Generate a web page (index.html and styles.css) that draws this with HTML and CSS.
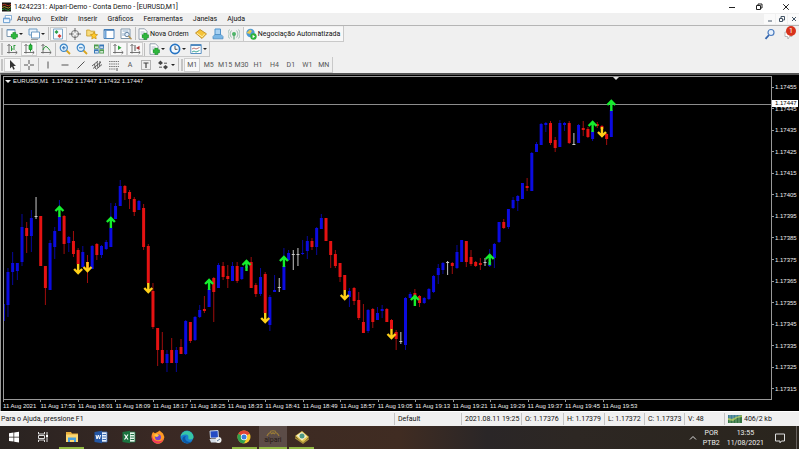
FILE: index.html
```html
<!DOCTYPE html>
<html lang="pt-BR">
<head>
<meta charset="utf-8">
<title>14242231: Alpari-Demo - Conta Demo - [EURUSD,M1]</title>
<link rel="stylesheet" href="styles.css">
</head>
<body>
<svg class="defs" aria-hidden="true">
  <symbol id="plus" viewBox="0 0 8 8"><path d="M2.500 .5h3v2h2v3h-2v2h-3v-2h-2v-3h2z" fill="#2eb83c" stroke="#138a25" stroke-width=".6"/></symbol>
  <symbol id="lens" viewBox="0 0 12 12"><path d="M7 7l4 4" stroke="#d9a520" stroke-width="1.800"/><circle cx="4.800" cy="4.800" r="3.600" fill="#e3f2fc" stroke="#3b86c8" stroke-width="1.200"/></symbol>
  <symbol id="axes" viewBox="0 0 12 12"><path d="M3 1.500v9M1 9.500h10M1.500 3L3 1.300 4.500 3M9.600 8l1.600 1.500L9.600 11" fill="none" stroke="#666" stroke-width=".9"/></symbol>
  <symbol id="page" viewBox="0 0 12 12"><path d="M2 .8h5.500L10 3.300v8H2z" fill="#fff" stroke="#7c8c9c" stroke-width=".8"/><path d="M3.500 4h4M3.500 6h4" stroke="#9ab" stroke-width=".8"/></symbol>
</svg>

<header class="titlebar">
  <svg class="app-icon" viewBox="0 0 10 10"><path d="M0 0h10v10H0z" fill="#181410"/><path d="M0 3q3-2 5 0t5-1" stroke="#c83a22" fill="none"/><path d="M0 5.500q3-2 5 0t5-1" stroke="#b9a52b" fill="none"/><path d="M0 8q3-2 5 0t5-1" stroke="#2f9a3a" fill="none"/></svg>
  <h1>14242231: Alpari-Demo - Conta Demo - [EURUSD,M1]</h1>
  <div class="window-buttons">
    <button aria-label="Minimizar"><svg viewBox="0 0 8 8"><path d="M1 4.500h6"/></svg></button>
    <button aria-label="Restaurar"><svg viewBox="0 0 8 8"><path d="M1.500 2.500h4v4h-4zM3 2.500V1h4v4H5.500"/></svg></button>
    <button aria-label="Fechar"><svg viewBox="0 0 8 8"><path d="M1.200 1.200l5.600 5.600M6.800 1.200L1.200 6.800"/></svg></button>
  </div>
</header>

<nav class="menubar">
  <svg class="menu-icon" viewBox="0 0 10 10"><path d="M2.500.5h7v5h-7z" fill="#fff" stroke="#77a3cf"/><path d="M.5 3.500h7v5h-7z" fill="#eef6ff" stroke="#5a94cc"/><path d="M1 4.200h6" stroke="#5a94cc"/></svg>
  <a href="#">Arquivo</a><a href="#">Exibir</a><a href="#">Inserir</a><a href="#">Gráficos</a><a href="#">Ferramentas</a><a href="#">Janelas</a><a href="#">Ajuda</a>
  <div class="child-buttons">
    <button aria-label="Minimizar gráfico"><svg viewBox="0 0 8 8"><path d="M2 6h4"/></svg></button>
    <button aria-label="Restaurar gráfico"><svg viewBox="0 0 8 8"><path d="M1.500 3.500h3v3h-3zM3 3.500v-2h3.500V5h-2"/></svg></button>
    <button aria-label="Fechar gráfico"><svg viewBox="0 0 8 8"><path d="M2 2l4 4M6 2L2 6"/></svg></button>
  </div>
</nav>

<main class="workspace">
  <div class="toolbars">
    <div class="toolbar">
      <div class="bar">
        <span class="grip"></span>
        <div class="tools drop two">
          <button aria-label="Novo gráfico"><svg viewBox="0 0 12 12"><path d="M1 1.500h8v7H1z" fill="#fff" stroke="#7894ac"/><path d="M1 2h8" stroke="#6c9ccc"/><use href="#plus" x="4.500" y="4" width="7.500" height="7.500"/></svg><i></i></button>
          <button aria-label="Perfis"><svg viewBox="0 0 12 12"><path d="M1 1h8v6H1z" fill="#eaf3fb" stroke="#6d9cc5"/><path d="M3.500 4h8v6h-8z" fill="#fff" stroke="#6d9cc5"/><path d="M3 11.300h7" stroke="#8a8a8a"/></svg><i></i></button>
        </div>
        <span class="sep"></span>
        <div class="tools five">
          <button class="on" aria-label="Observação do mercado"><svg viewBox="0 0 12 12"><path d="M1.500 1h9v10h-9z" fill="#f8fbff" stroke="#7da7c9"/><path d="M2.500 4l2-2 2 2-2 2z" fill="#2a9d45"/><path d="M5.500 8l2-2 2 2-2 2z" fill="#d83a32"/></svg></button>
          <button aria-label="Janela de dados"><svg viewBox="0 0 12 12"><circle cx="6" cy="6" r="3.600" fill="none" stroke="#777"/><path d="M6 0v4.500M6 7.500V12M0 6h4.500M7.500 6H12" stroke="#666"/></svg></button>
          <button aria-label="Navegador"><svg viewBox="0 0 12 12"><path d="M.7 2h3l1 1.200h4V8h-8z" fill="#f8dc7e" stroke="#c79a25" stroke-width=".8"/><path d="M8 4l1.100 2.300 2.500.3-1.800 1.800.4 2.500L8 9.700 5.800 11l.4-2.500-1.800-1.900 2.500-.3z" fill="#ffca28" stroke="#c58c12" stroke-width=".7"/></svg></button>
          <button aria-label="Terminal"><svg viewBox="0 0 12 12"><path d="M1 1.500h10v9H1z" fill="#fff" stroke="#4e86bd"/><path d="M1 2h10" stroke="#3e78b4" stroke-width="1.500"/><path d="M1.500 3h2v7h-2z" fill="#6fa4d8"/></svg></button>
          <button aria-label="Testador de estratégia"><svg viewBox="0 0 12 12"><path d="M1 1h9v9.500H1z" fill="#fff" stroke="#8198ac"/><path d="M2.500 3h6M3 8V5M5 8V4.500" stroke="#8aaccb"/><circle cx="7" cy="6.500" r="2.200" fill="#e4effa" stroke="#6686a6"/><path d="M8.500 8l3 3.300" stroke="#b29454" stroke-width="1.500"/></svg></button>
        </div>
        <span class="sep"></span>
        <button class="labelled order"><svg viewBox="0 0 12 12"><use href="#page" width="12" height="12"/><use href="#plus" x="4.500" y="4.500" width="7.500" height="7.500"/></svg>Nova Ordem</button>
        <div class="tools three">
          <button aria-label="MetaEditor"><svg viewBox="0 0 12 12"><path d="M.5 5L5 1.500l6.500 4.300L7 10.500z" fill="#f5c339" stroke="#b9851b" stroke-width=".8"/><path d="M2 5.300l5.200 3.500 2.500-3" fill="none" stroke="#fff0a8"/></svg></button>
          <button aria-label="Comunidade"><svg viewBox="0 0 12 12"><path d="M3 1h5.500v6H3z" fill="#a9d2f2" stroke="#4c93cd"/><path d="M1 8.500L3 6.500h6l2 2v2.300H1z" fill="#79b6e5" stroke="#4c8dc2" stroke-width=".8"/></svg></button>
          <button aria-label="Sinais"><svg viewBox="0 0 12 12"><circle cx="6" cy="6" r="2" fill="#4db568"/><path d="M3.500 2.500a5 5 0 000 7M8.500 2.500a5 5 0 010 7M1.500 1.500a7 7 0 000 9M10.500 1.500a7 7 0 010 9" fill="none" stroke="#93b7aa" stroke-width=".9"/><path d="M6 7v4.500" stroke="#469d62"/></svg></button>
        </div>
        <button class="labelled auto on"><svg viewBox="0 0 12 12"><circle cx="5.500" cy="5" r="4.200" fill="#4c9bd5"/><path d="M1.500 5L5 1.500l2 1.500-2 3z" fill="#e9c650"/><circle cx="8.500" cy="8.500" r="3.200" fill="#2bb339"/><path d="M7.600 6.800l2.500 1.700-2.500 1.700z" fill="#fff"/></svg>Negociação Automatizada</button>
      </div>
      <div class="side-tools">
        <button aria-label="Pesquisar"><svg viewBox="0 0 12 12"><path d="M5 7L1.500 10.800" stroke="#3465ad" stroke-width="1.800"/><circle cx="7" cy="4.500" r="3" fill="#e7f1fd" stroke="#4d7dbf" stroke-width="1.200"/></svg></button>
        <button class="alert" aria-label="Notificações"><svg viewBox="0 0 12 12"><path d="M1 4h7v4.500H5.500L4 11 3.500 8.500H1z" fill="#fff" stroke="#aaa" stroke-width=".8"/></svg><b>1</b></button>
      </div>
    </div>

    <div class="toolbar">
      <div class="bar">
        <span class="grip"></span>
        <div class="tools three">
          <button aria-label="Barras"><svg viewBox="0 0 12 12"><use href="#axes" width="12" height="12"/><path d="M5.500 3v5M8 2v5M8 2.500h1.500M5.500 6H7" stroke="#2c9a3c"/></svg></button>
          <button class="on" aria-label="Candles"><svg viewBox="0 0 12 12"><use href="#axes" width="12" height="12"/><path d="M7.500.5v8" stroke="#168a29"/><path d="M6 2h3v4.500H6z" fill="#2bbd3d" stroke="#168a29" stroke-width=".7"/></svg></button>
          <button aria-label="Linha"><svg viewBox="0 0 12 12"><use href="#axes" width="12" height="12"/><path d="M3 7q2-5 4-3t3 3.500" fill="none" stroke="#2c9a3c"/></svg></button>
        </div>
        <span class="sep"></span>
        <div class="tools three">
          <button aria-label="Ampliar"><svg viewBox="0 0 12 12"><use href="#lens" width="12" height="12"/><path d="M3 4.800h3.600M4.800 3v3.600" stroke="#2b6fb4"/></svg></button>
          <button aria-label="Reduzir"><svg viewBox="0 0 12 12"><use href="#lens" width="12" height="12"/><path d="M3 4.800h3.600" stroke="#2b6fb4"/></svg></button>
          <button aria-label="Lado a lado"><svg viewBox="0 0 12 12"><path d="M1 1.500h4.700v4.200H1zM6.300 6.300H11v4.200H6.300z" fill="#4d9c4f"/><path d="M6.300 1.500H11v4.200H6.300zM1 6.300h4.700v4.200H1z" fill="#3878b7"/><path d="M2 3.500h3v1.200H2zM7.200 3.500h3v1.200h-3zM2 8.300h3v1.200H2zM7.200 8.300h3v1.200h-3z" fill="#fff"/></svg></button>
        </div>
        <span class="sep"></span>
        <div class="tools pair">
          <button class="on" aria-label="Rolagem automática"><svg viewBox="0 0 12 12"><use href="#axes" width="12" height="12"/><path d="M6 2.500l3.500 2.300L6 7z" fill="#2ca63c"/></svg></button>
          <button class="on" aria-label="Deslocamento"><svg viewBox="0 0 12 12"><use href="#axes" width="12" height="12"/><path d="M6 2v6" stroke="#555"/><path d="M10.500 2.800L7 5l3.500 2z" fill="#a33"/></svg></button>
        </div>
        <span class="sep"></span>
        <div class="tools drop triple">
          <button aria-label="Indicadores"><svg viewBox="0 0 12 12"><use href="#page" width="12" height="12"/><use href="#plus" x="4.500" y="4.500" width="7.500" height="7.500"/></svg><i></i></button>
          <button aria-label="Períodos"><svg viewBox="0 0 12 12"><circle cx="6" cy="6" r="4.600" fill="#f4faff" stroke="#2674c3" stroke-width="1.700"/><path d="M6 3v3.300h2.500" fill="none" stroke="#444" stroke-width=".9"/></svg><i></i></button>
          <button aria-label="Modelos"><svg viewBox="0 0 12 12"><path d="M.8 1.500h10.400v9H.8z" fill="#fff" stroke="#5b91c4"/><path d="M1 2.300h10" stroke="#4e88bf" stroke-width="1.500"/><path d="M2 6l2-1 2 1 3.500-1.500" fill="none" stroke="#b77"/><path d="M2 9l2-1 2 1 3.500-1.500" fill="none" stroke="#4a9"/></svg><i></i></button>
        </div>
      </div>
    </div>

    <div class="toolbar">
      <div class="bar">
        <span class="grip"></span>
        <div class="tools pair">
          <button class="on" aria-label="Cursor"><svg viewBox="0 0 12 12"><path d="M4 1v8.500l2-2 1.300 3.300 1.500-.7-1.400-3H10z" fill="#333"/></svg></button>
          <button aria-label="Mira"><svg viewBox="0 0 12 12"><path d="M6 1v4M6 7v4M1 6h4M7 6h4" stroke="#555"/></svg></button>
        </div>
        <span class="sep"></span>
        <div class="tools eight">
          <button aria-label="Linha vertical"><svg viewBox="0 0 12 12"><path d="M6 2.500v7" stroke="#555"/></svg></button>
          <button aria-label="Linha horizontal"><svg viewBox="0 0 12 12"><path d="M2.500 6h7" stroke="#555"/></svg></button>
          <button aria-label="Linha de tendência"><svg viewBox="0 0 12 12"><path d="M2.500 9.500l7-7" stroke="#555"/></svg></button>
          <button aria-label="Canal"><svg viewBox="0 0 12 12"><path d="M1 7l6-5M2 9.500L10 3M5 10.500l6-5M3.500 5l1 5M6 3l1 6M9 2l-.5 5" stroke="#555" stroke-width=".9"/></svg></button>
          <button aria-label="Fibonacci"><svg viewBox="0 0 12 12"><path d="M1 2.500h10M1 5h10M1 7.500h10M1 10h7" stroke="#777" stroke-dasharray="1.500 .7"/><path d="M9 9v3" stroke="#555"/></svg></button>
          <button aria-label="Texto">A</button>
          <button aria-label="Etiqueta"><svg viewBox="0 0 12 12"><path d="M1.500 1.500h9v9h-9z" fill="none" stroke="#777" stroke-dasharray="1 1"/><path d="M3.500 4h5M6 4v5" stroke="#444" stroke-width="1.200"/></svg></button>
          <button aria-label="Setas"><svg viewBox="0 0 12 12"><path d="M1 4l2.500-2.500L6 4 3.500 6zM6 8l2.500-2L11 8l-2.500 2.500z" fill="#444"/><path d="M7 4.200h3M2 8.200h3" stroke="#555"/></svg></button>
        </div>
        <i class="caret"></i>
        <span class="sep"></span>
        <span class="grip"></span>
        <div class="tools nine">
          <button class="on">M1</button><button>M5</button><button>M15</button><button>M30</button><button>H1</button><button>H4</button><button>D1</button><button>W1</button><button>MN</button>
        </div>
      </div>
    </div>
  </div>

  <section class="chart">
    <div class="plot">
      <svg id="candles" viewBox="4 77 767 323" preserveAspectRatio="xMinYMin slice" role="img" aria-label="EURUSD M1"></svg>
      <p class="quote"><i></i>EURUSD,M1&nbsp; 1.17432 1.17447 1.17432 1.17447</p>
    </div>
    <div class="prices">
      <span>1.17455</span><span>1.17445</span><span>1.17435</span><span>1.17425</span><span>1.17415</span><span>1.17405</span><span>1.17395</span><span>1.17385</span><span>1.17375</span><span>1.17365</span><span>1.17355</span><span>1.17345</span><span>1.17335</span><span>1.17325</span><span>1.17315</span>
      <b>1.17447</b>
    </div>
    <div class="times">
      <span>11 Aug 2021</span><span>11 Aug 17:53</span><span>11 Aug 18:01</span><span>11 Aug 18:09</span><span>11 Aug 18:17</span><span>11 Aug 18:25</span><span>11 Aug 18:33</span><span>11 Aug 18:41</span><span>11 Aug 18:49</span><span>11 Aug 18:57</span><span>11 Aug 19:05</span><span>11 Aug 19:13</span><span>11 Aug 19:21</span><span>11 Aug 19:29</span><span>11 Aug 19:37</span><span>11 Aug 19:45</span><span>11 Aug 19:53</span>
    </div>
  </section>
</main>

<footer class="status">
  <span>Para o Ajuda, pressione F1</span><span>Default</span><span>2021.08.11 19:25</span><span>O: 1.17376</span><span>H: 1.17379</span><span>L: 1.17372</span><span>C: 1.17373</span><span>V: 48</span>
  <span><svg viewBox="0 0 14 8"><path d="M0 0h14v8H0z" fill="#3e7d93"/><path d="M0 3l4 1 4-2 6-2v8H0z" fill="#9cbc55"/><path d="M0 5l5 1 4-3 5-1v6H0z" fill="#347543"/><path d="M2 0v8M5 0v8M8 0v8M11 0v8" stroke="#d6e6cc" stroke-width=".4"/></svg>406/2 kb</span>
</footer>

<footer class="taskbar">
  <div class="apps">
    <button aria-label="Iniciar"><svg viewBox="0 0 16 16"><path d="M3 4.200l4.500-.7v4.200H3zM8.200 3.400L13 2.700v5H8.200zM3 8.400h4.500v4.200L3 12zM8.200 8.400H13v5l-4.800-.7z" fill="#fff"/></svg></button>
    <button aria-label="Visão de tarefas"><svg viewBox="0 0 16 16"><path d="M3.500 3v2h6V3M3.500 13v-2h6v2M3.500 6.500h6v3h-6zM12 3v10" fill="none" stroke="#ddd"/><path d="M11 6h2v2h-2z" fill="#fff"/></svg></button>
    <button class="open" aria-label="Explorador"><svg viewBox="0 0 16 16"><path d="M2 3h5l1 1.500h6V13H2z" fill="#e8ae3b"/><path d="M2 5.500h12V13H2z" fill="#fbd873"/><path d="M4 8.500h8V13h-2v-2H6v2H4z" fill="#4aa3df"/></svg></button>
    <button aria-label="Word"><svg viewBox="0 0 16 16"><path d="M8 3h6v10H8z" fill="#e8f1fb" stroke="#3c6cb4" stroke-width=".8"/><path d="M9.500 5.500H13M9.500 8H13M9.500 10.500H13" stroke="#3c6cb4"/><path d="M1.500 3L9 1.700v12.600L1.500 13z" fill="#2457a5"/><path d="M3 6l1 4 1.300-4 1.200 4 1-4" fill="none" stroke="#fff"/></svg></button>
    <button aria-label="Excel"><svg viewBox="0 0 16 16"><path d="M8 3h6v10H8z" fill="#e7f5eb" stroke="#217346" stroke-width=".8"/><path d="M9.500 5.500H13M9.500 8H13M9.500 10.500H13" stroke="#217346"/><path d="M1.500 3L9 1.700v12.600L1.500 13z" fill="#1b7440"/><path d="M3.500 5.500l3.500 5M7 5.500l-3.500 5" stroke="#fff" stroke-width="1.200"/></svg></button>
    <button aria-label="Firefox"><svg viewBox="0 0 16 16"><path d="M2 5l1-2 2 1.200 3-1.500L9.500 1.500 13 4.500q2 3 .8 6a6.200 6.200 0 01-11.700 0Q1.300 7.500 2 5z" fill="#ff9a24"/><path d="M2 5q0 6 5 7t6.500-3q-.5 5-5.700 5.400Q3 14.200 2 10.500 1.200 7 2 5z" fill="#f0385c"/><circle cx="8" cy="8.300" r="3" fill="#7544cf"/><path d="M4 6q3-2 5 .5L7 8q-2 0-3-2z" fill="#ffc83c"/></svg></button>
    <button aria-label="Edge"><svg viewBox="0 0 16 16"><circle cx="8" cy="8" r="6.500" fill="#1880cf"/><path d="M1.600 7.500A6.500 6.500 0 0114.500 8q-.2 2.500-3.500 2.500-2 0-1.700-1.500.7-3-2.500-3.400-3-.3-5.200 1.900z" fill="#37c6a5"/><path d="M6.800 7q-2 3.500 2 5.500 2 1 4.500-.6A6.500 6.500 0 018 14.500Q2.500 13 3.500 9q.8-2 3.300-2z" fill="#0c57a4"/></svg></button>
    <button aria-label="Área remota"><svg viewBox="0 0 16 16"><path d="M3 2l8-.5.500 7.500H3.500z" fill="#244bc4" stroke="#c4d2e4"/><path d="M2.500 10h8l2 3.500H4z" fill="#d5dce6"/><circle cx="11.500" cy="11" r="3" fill="#eee"/><path d="M10 12l3-2" stroke="#5a7a9a"/></svg></button>
    <button class="open" aria-label="Chrome"><svg viewBox="0 0 16 16"><circle cx="8" cy="8" r="6.500" fill="#f9c92d"/><path d="M8 8L2.370 4.750A6.500 6.500 0 0113.630 4.750z" fill="#e24335"/><path d="M8 8L2.370 4.750A6.500 6.500 0 008 14.500l2.500-5z" fill="#2fa24f"/><circle cx="8" cy="8" r="3.200" fill="#fff"/><circle cx="8" cy="8" r="2.500" fill="#3b7de0"/></svg></button>
    <button class="open active alpari"><svg viewBox="0 0 16 7"><path d="M2 6q1.500-3.500 4-3.500M6 4q2-2 4 0M10 2.500q2.500 0 4 3.500M5 1.500q3-1.500 6 0" fill="none" stroke="#9a7c36" stroke-width="1.200"/></svg>alpari</button>
    <button class="open" aria-label="MetaEditor"><svg viewBox="0 0 16 16"><path d="M1 7l7-5 7 6-6 6z" fill="#e2c64f"/><path d="M2.500 6.500L8 3l5 4.500-5 4z" fill="#f5f0cf"/><circle cx="8" cy="7" r="2.500" fill="#4d9a85"/><path d="M1 8l8 5 6-4v1.500L9 15 1 9.500z" fill="#a8923a"/></svg></button>
  </div>
  <div class="tray">
    <svg class="up" viewBox="0 0 8 8"><path d="M1 5.500l3-3 3 3"/></svg>
    <p>POR<br>PTB2</p>
    <p>13:55<br>11/08/2021</p>
    <svg class="note" viewBox="0 0 12 12"><path d="M1.500 2h9v7H7.500L6 10.800V9H1.500z"/></svg>
  </div>
</footer>
<script src="chart.js"></script>
</body>
</html>
```

FILE: styles.css
```css
* { box-sizing: border-box; }
body {
  margin: 0;
  height: 100vh;
  display: flex;
  flex-direction: column;
  overflow: hidden;
  background: #f0f0f0;
  color: #111;
  font: 7px/10px Roboto, "Open Sans", sans-serif;
}
h1, p { margin: 0; font: inherit; }
button { margin: 0; padding: 0; border: 0; background: none; color: inherit; font: inherit; }
a { color: inherit; text-decoration: none; }
svg { display: block; flex: none; }
.defs { position: absolute; width: 0; height: 0; }

.titlebar { display: flex; align-items: center; height: 13px; padding-left: 2px; background: #fff; }
.app-icon { width: 9px; height: 10px; margin-right: 3px; }
.window-buttons { display: flex; margin-left: auto; }
.window-buttons button { width: 27px; display: grid; place-items: center; }
.window-buttons svg { width: 8px; height: 8px; fill: none; stroke: #222; stroke-width: 1; }

.menubar { display: flex; align-items: center; gap: 10px; height: 13px; padding-left: 3px; border-bottom: 1px solid #b5b5b5; }
.menu-icon { width: 9px; height: 9px; margin-right: -5px; }
.child-buttons { display: flex; gap: 1px; margin-left: auto; }
.child-buttons button { width: 11px; height: 10px; display: grid; place-items: center; background: #fafafa; }
.child-buttons svg { width: 8px; height: 8px; fill: none; stroke: #456; stroke-width: 1; }

.workspace { flex: 1; min-height: 0; display: flex; flex-direction: column; }
.toolbar { display: flex; justify-content: space-between; height: 16px; }
.bar { display: flex; align-items: center; border: 1px solid #c9c9c9; border-width: 0 1px 1px 0; }
.toolbar + .toolbar { height: 15px; }
.toolbar:last-child { height: 16px; }
.grip { width: 2px; height: 12px; margin: 0 1px; border: 1px solid #c4c4c4; border-width: 0 1px; }
.sep { width: 1px; height: 13px; margin: 0 1px; background: #bdbdbd; }
.tools { display: grid; grid-auto-flow: column; grid-auto-columns: minmax(0, 1fr); height: 14px; }
.tools button { display: flex; align-items: center; justify-content: center; color: #555; }
.tools svg, .labelled svg, .side-tools svg { width: 12px; height: 12px; }
.tools .on { background: #f8f8f8; border: 1px solid #cfcfcf; }
.drop button { justify-content: flex-start; gap: 1px; padding-left: 2px; }
.drop i, .caret { border: 2px solid transparent; border-top-color: #222; border-bottom: 0; }
.pair { width: 33px; }
.two { width: 43px; }
.three { width: 50px; }
.triple { width: 63px; }
.five { width: 84px; }
.eight { width: 131px; }
.nine { width: 148px; }
.caret { margin-right: 2px; }
.labelled { display: flex; align-items: center; gap: 1px; height: 14px; color: #111; white-space: nowrap; }
.order { padding: 0 4px 0 0; }
.auto { padding: 0 3px 0 1px; background: #f8f8f8; border-left: 1px solid #c9c9c9; }
.side-tools { display: flex; align-items: center; gap: 8px; padding-right: 3px; }
.alert { position: relative; }
.alert b {
  position: absolute; top: -2px; right: 0;
  width: 10px; height: 10px; border-radius: 5px;
  background: #d8321c; color: #fff; font-weight: 400; text-align: center;
}

.chart {
  flex: 1; min-height: 0;
  display: grid;
  grid-template: minmax(0, 1fr) 11px / minmax(0, 1fr) 26px;
  padding: 1px 1px 0 2px;
  background: #000;
  border-top: 2px solid #555;
  border-left: 1px solid #999;
  color: #eee;
  font: 6px/8px "Liberation Sans", sans-serif;
}
.plot { position: relative; overflow: hidden; border: 1px solid #999; }
#candles { width: 100%; height: 100%; }
.quote { position: absolute; top: 0; left: 1px; display: flex; align-items: center; gap: 2px; white-space: nowrap; }
.quote i { border: 3px solid transparent; border-top-color: #eee; border-bottom: 0; }
.prices { position: relative; display: flex; flex-direction: column; justify-content: space-between; padding: 7px 0; }
.prices span { display: flex; align-items: center; gap: 1px; }
.prices span::before { content: ""; width: 2px; height: 1px; background: #999; }
.prices b { position: absolute; left: 0; right: 0; top: 24px; padding-left: 3px; line-height: 7px; background: #fff; color: #000; font-weight: 400; }
.times { grid-column: 1 / -1; display: grid; grid-template-columns: repeat(17, minmax(0, 1fr)); width: 637px; max-width: 100%; }
.times span { white-space: nowrap; }
.times span::before { content: ""; display: block; width: 1px; height: 2px; background: #999; }

.status { display: grid; grid-template-columns: 1fr 67px 60px 42px 41px 40px 40px 40px 75px; align-items: center; height: 15px; border-top: 1px solid #fff; }
.status span { display: flex; align-items: center; gap: 2px; height: 12px; padding-left: 3px; border-left: 1px solid #c4c4c4; white-space: nowrap; }
.status span:first-child { padding-left: 1px; border: 0; }
.status svg { width: 14px; height: 8px; }

.taskbar {
  display: flex; justify-content: space-between; height: 23px;
  background: linear-gradient(90deg, #292321, #3a2924 20%, #402c22 50%, #2a2627 61%, #2d2723 72%, #2a251d);
  color: #eee;
}
.apps { display: grid; grid-template-columns: repeat(11, 1fr); width: 316px; }
.apps button { display: flex; flex-direction: column; align-items: center; justify-content: center; border: solid transparent; border-width: 0 0 2px; }
.apps svg { width: 16px; height: 16px; }
.apps .open { margin: 0 2px; border-bottom-color: #91b843; }
.apps .active { margin: 0; background: #5c4c47; }
.alpari { color: #241a16; line-height: 7px; }
.apps .alpari svg { height: 7px; }
.tray { display: flex; align-items: center; padding-right: 2px; text-align: center; }
.tray svg { fill: none; stroke: #ddd; }
.tray p + p { margin-left: 7px; }
.up { width: 8px; height: 8px; margin-right: 6px; }
.note { width: 12px; height: 12px; margin: 0 10px; }
.tray::after { content: ""; width: 1px; height: 23px; background: #66605c; }
```

FILE: chart.js
```javascript
// One row per minute: colour, then y of high, body top, body bottom, low.
const rows = `
B 285 304 321 321|B 268 272 305 317|B 252 263 272 285|B 263 263 271 280|B 214 227 262 266
R 222 228 236 253|B 210 218 236 252|W 197 216 217 219|R 216 216 266 266|R 266 266 288 305
B 240 243 290 290|B 227 231 247 259|B 200 216 231 231|R 215 216 244 254|B 236 237 243 252
R 231 241 254 257|R 248 250 264 266|B 246 252 267 267|R 255 262 268 283|B 245 246 269 269
R 243 244 255 260|B 245 246 255 258|B 240 242 249 250|B 203 228 247 247|B 203 206 219 219
B 180 186 206 206|R 185 186 193 200|R 190 192 199 209|R 197 199 212 216|B 200 201 210 210
R 204 208 247 250|R 244 246 283 284|R 283 291 327 329|R 328 328 350 366|R 332 350 363 364
B 350 354 363 372|R 338 350 363 363|B 347 350 363 372|R 339 347 354 354|B 320 321 354 355
R 322 322 341 343|B 316 317 340 341|B 305 310 317 318|R 296 309 311 313|B 289 289 307 307
R 277 278 292 322|B 263 265 288 288|R 262 266 277 280|R 265 276 279 288|B 262 266 281 281
R 262 266 281 283|B 267 267 279 280|B 262 266 268 270|R 257 262 288 288|R 283 285 294 297
B 268 277 294 296|R 272 274 313 314|B 295 297 325 331|B 275 290 292 292|W 278 287 288 292
B 248 266 290 290|B 250 253 260 261|W 250 254 255 270|W 248 254 255 266|B 240 253 254 255
B 236 241 251 259|R 238 241 247 250|B 227 228 247 255|B 214 218 229 229|R 218 218 241 241
R 241 241 255 268|R 250 254 266 268|R 263 263 277 282|R 275 275 290 291|B 288 291 297 307
R 287 288 301 305|R 292 300 318 320|R 304 322 333 333|B 309 310 331 333|R 308 309 322 328
B 307 313 320 320|B 305 309 311 318|R 308 309 322 322|R 319 320 329 330|R 330 332 339 350
W 332 341 342 344|B 297 298 345 350|B 292 294 298 298|R 289 293 296 298|R 295 296 303 307
B 297 298 303 304|B 288 289 299 300|B 275 276 292 293|B 264 268 275 284|B 262 263 270 274
W 261 262 263 275|R 262 263 266 274|B 245 252 268 269|B 240 240 262 262|R 241 241 262 267
R 250 257 264 266|R 261 262 266 267|R 258 263 265 270|W 258 262 263 266|B 249 262 266 267
B 243 244 258 268|B 222 222 242 243|R 219 222 228 229|B 209 209 227 229|B 197 200 208 209
B 195 196 201 211|B 183 183 199 199|R 178 186 188 191|B 152 153 191 191|B 142 144 152 152
B 123 124 145 145|B 122 123 125 132|R 121 123 143 145|R 137 140 148 152|B 120 123 147 147
B 122 123 125 131|R 121 123 143 144|W 133 144 145 145|B 124 125 143 143|R 121 128 130 136
R 127 129 137 138|B 130 131 139 141|R 122 124 126 128|R 125 126 129 130|R 133 134 139 145
B 110 110 137 137`.trim().split(/[|\n]/).map(r => r.trim().split(" "));

// Signal arrows: candle index and y of the arrow's top edge.
const up = [[12, 205], [23, 216], [44, 278], [52, 259], [60, 255], [88, 294], [104, 253], [126, 120], [130, 99]];
const down = [[16, 264], [18, 262], [31, 283], [56, 313], [73, 290], [83, 329], [128, 127]];

const color = { B: "#0b0be0", R: "#e51212", W: "#c8c8c8" };
const x = i => 3.3 + i * 4.677;
let out = '<path d="M3 104.500H772" stroke="#8c8c8c"/><path d="M613 77h6l-3 3z" fill="#ddd"/>';
rows.forEach(([c, hi, top, bottom, lo], i) => {
  const half = 1.5;
  out += `<path d="M${x(i)} ${hi}V${lo}" stroke="${color[c]}" stroke-width="${c === "W" ? 1 : 0.7}"/>`;
  out += `<path d="M${x(i) - half} ${top}h${half * 2}V${bottom}h${-half * 2}z" fill="${color[c]}"/>`;
});
for (const [i, y] of up)
  out += `<path d="M${x(i)} ${y + 12}v-10M${x(i) - 4} ${y + 6}l4 -4 4 4" fill="none" stroke="#14ee2c" stroke-width="2.4"/>`;
for (const [i, y] of down)
  out += `<path d="M${x(i)} ${y}v9M${x(i) - 4} ${y + 5}l4 4 4 -4" fill="none" stroke="#ffd017" stroke-width="2.4"/>`;
document.getElementById("candles").innerHTML = out;
```
